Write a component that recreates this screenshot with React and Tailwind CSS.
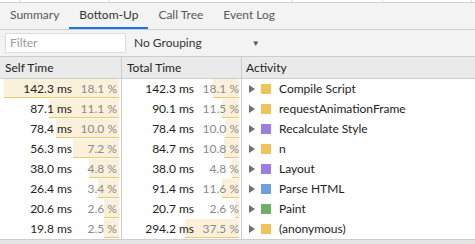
const rows = [
  { self: "142.3 ms", selfPct: "18.1 %", selfBar: 115, total: "142.3 ms", totalPct: "18.1 %", totalBar: 26, name: "Compile Script", color: "bg-[#f0c45a]" },
  { self: "87.1 ms", selfPct: "11.1 %", selfBar: 70, total: "90.1 ms", totalPct: "11.5 %", totalBar: 17, name: "requestAnimationFrame", color: "bg-[#f0c45a]" },
  { self: "78.4 ms", selfPct: "10.0 %", selfBar: 63, total: "78.4 ms", totalPct: "10.0 %", totalBar: 14, name: "Recalculate Style", color: "bg-[#9a7fe3]" },
  { self: "56.3 ms", selfPct: "7.2 %", selfBar: 46, total: "84.7 ms", totalPct: "10.8 %", totalBar: 15, name: "n", color: "bg-[#f0c45a]" },
  { self: "38.0 ms", selfPct: "4.8 %", selfBar: 30, total: "38.0 ms", totalPct: "4.8 %", totalBar: 7, name: "Layout", color: "bg-[#9a7fe3]" },
  { self: "26.4 ms", selfPct: "3.4 %", selfBar: 21, total: "91.4 ms", totalPct: "11.6 %", totalBar: 17, name: "Parse HTML", color: "bg-[#6b9fe0]" },
  { self: "20.6 ms", selfPct: "2.6 %", selfBar: 15, total: "20.7 ms", totalPct: "2.6 %", totalBar: 4, name: "Paint", color: "bg-[#6cb163]" },
  { self: "19.8 ms", selfPct: "2.5 %", selfBar: 15, total: "294.2 ms", totalPct: "37.5 %", totalBar: 54, name: "(anonymous)", color: "bg-[#f0c45a]" },
];

const tabs = ["Summary", "Bottom-Up", "Call Tree", "Event Log"];

const TimeCell = ({ value, pct, bar, className }) => (
  <div className={`relative flex items-center h-full border-r border-[#cdcdcd] ${className}`}>
    <div
      className="absolute top-0 bottom-[1px] right-[2px] bg-[#fbf1da] border-b border-[#f0c870]"
      style={{ width: bar }}
    />
    <span className="relative w-[72px] text-right text-[#222]">{value}</span>
    <span className="relative w-[45px] text-right text-[#8a8a8a]">{pct}</span>
  </div>
);

export default function App() {
  return (
    <div className="w-[475px] h-[244px] overflow-hidden bg-white text-[12px] font-['Lato',sans-serif] text-[#333]">
      <div className="flex h-[3px] border-b border-[#cfcfcf]">
        <div className="w-[20px] border-r border-[#ddd]" />
        <div className="w-[90px] border-r border-[#ddd]" />
        <div className="w-[182px] border-r border-[#ddd]" />
        <div className="w-[91px] border-r border-[#ddd]" />
        <div className="w-[89px] border-r border-[#ddd]" />
      </div>

      <div className="flex h-[27px] bg-[#f3f3f3] border-b border-[#cdcdcd]">
        {tabs.map((t) => (
          <div
            key={t}
            className={`flex items-center px-[10px] border-b-2 ${
              t === "Bottom-Up" ? "border-[#1a73e8] text-[#333]" : "border-transparent text-[#5a5a5a]"
            }`}
          >
            {t}
          </div>
        ))}
      </div>

      <div className="flex items-center h-[27px] bg-[#f3f3f3] border-b border-[#cdcdcd]">
        <div className="ml-[5px] w-[121px] h-[20px] bg-white border border-[#dcdcdc] flex items-center pl-[4px] text-[#999]">
          Filter
        </div>
        <div className="ml-[8px] text-[#333]">No Grouping</div>
        <div className="ml-[50px] text-[8px] text-[#555]">▼</div>
      </div>

      <div className="flex h-[22px] bg-[#eaeaea] border-b border-[#cdcdcd] text-[#222]">
        <div className="w-[122px] flex items-center pl-[5px] border-r border-[#cdcdcd]">Self Time</div>
        <div className="w-[120px] flex items-center pl-[5px] border-r border-[#cdcdcd]">Total Time</div>
        <div className="flex-1 flex items-center pl-[4px]">Activity</div>
      </div>

      <div className="border-b border-[#cdcdcd]">
        {rows.map((r) => (
          <div key={r.name} className="flex h-[20px]">
            <TimeCell value={r.self} pct={r.selfPct} bar={r.selfBar} className="w-[122px]" />
            <TimeCell value={r.total} pct={r.totalPct} bar={r.totalBar} className="w-[120px]" />
            <div className="flex-1 flex items-center pl-[7px] text-[#222]">
              <svg width="6" height="8" viewBox="0 0 6 8" className="mr-[6px]">
                <path d="M0 0 L6 4 L0 8 Z" fill="#6e6e6e" />
              </svg>
              <span className={`w-[10px] h-[10px] mr-[8px] ${r.color}`} />
              {r.name}
            </div>
          </div>
        ))}
      </div>
      <div className="h-full bg-[#e4e4e4]" />
    </div>
  );
}
